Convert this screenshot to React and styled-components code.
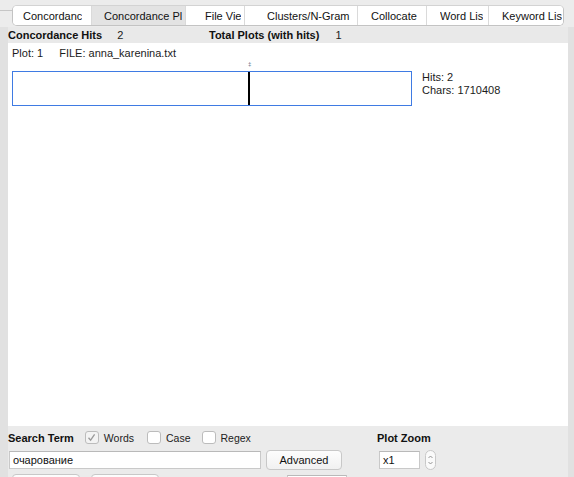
import React from 'react';
import styled, { createGlobalStyle } from 'styled-components';

const GlobalStyle = createGlobalStyle`
  html, body { margin: 0; padding: 0; }
  body {
    background: #e1e1e1;
    font-family: "Liberation Sans", Arial, sans-serif;
    font-size: 11px;
    color: #1b1b1b;
  }
`;

const Window = styled.div`
  width: 574px;
  height: 477px;
  overflow: hidden;
  display: flex;
  flex-direction: column;
  background: #e1e1e1;
`;

const TopBar = styled.div`
  position: relative;
  flex: none;
  height: 27px;
  box-sizing: border-box;
  padding: 5px 0 0 12px;
  background: #ececec;
  &::before {
    content: '';
    position: absolute;
    left: 0;
    top: 10px;
    width: 14px;
    height: 1px;
    background: #c6c6c6;
  }
`;

const Tabs = styled.div`
  position: relative;
  display: flex;
  width: 552px;
  height: 21px;
  box-sizing: border-box;
  border: 1px solid #c3c3c3;
  border-top-color: #d3d3d3;
  border-radius: 5px;
  background: #fff;
  overflow: hidden;
`;

const Tab = styled.div`
  flex: ${(p) => (p.last ? '1' : 'none')};
  width: ${(p) => p.w}px;
  box-sizing: border-box;
  display: flex;
  align-items: center;
  padding: 0 2px 0 ${(p) => p.pad}px;
  border-left: ${(p) => (p.first ? 'none' : '1px solid #dadada')};
  background: ${(p) => (p.active ? '#e3e3e3' : '#fff')};
  font-size: 11px;
  color: #111;
`;

const TabLabel = styled.span`
  display: block;
  overflow: hidden;
  white-space: nowrap;
`;

const Panel = styled.div`
  flex: 1;
  display: flex;
  flex-direction: column;
  margin: 0 6px 0 8px;
  background: #ebebeb;
`;

const HeaderRow = styled.div`
  height: 16px;
  display: flex;
  align-items: center;
  background: #e9e9e9;
`;

const Stat = styled.div`
  width: ${(p) => p.w}px;
  display: flex;
  align-items: center;
  gap: ${(p) => p.gap}px;
`;

const Bold = styled.span`
  font-weight: bold;
  color: #111;
`;

const Content = styled.div`
  height: 383px;
  box-sizing: border-box;
  padding: 4px 4px 0;
  background: #fff;
`;

const InfoLine = styled.div`
  display: flex;
  gap: 16px;
  line-height: 13px;
`;

const PlotRow = styled.div`
  display: flex;
  align-items: flex-start;
  gap: 10px;
  margin-top: 11px;
`;

const PlotBox = styled.div`
  position: relative;
  width: 400px;
  height: 35px;
  box-sizing: border-box;
  border: 1px solid #3f7be3;
`;

const HitLine = styled.div`
  position: absolute;
  top: 0;
  bottom: 0;
  left: ${(p) => p.x}px;
  width: 2px;
  background: #000;
`;

const HitMark = styled.div`
  position: absolute;
  top: -11px;
  left: ${(p) => p.x - 1}px;
  font-size: 6px;
  line-height: 6px;
  color: #4a5a78;
`;

const PlotInfo = styled.div`
  line-height: 13px;
`;

const Bottom = styled.div`
  flex: 1;
  display: grid;
  grid-template-columns: 369px auto;
  padding-top: 5px;
  background: #ebebeb;
`;

const Col = styled.div`
  display: flex;
  flex-direction: column;
`;

const Row = styled.div`
  display: flex;
  align-items: center;
  height: ${(p) => p.h}px;
  margin-top: ${(p) => p.mt || 0}px;
  padding-left: ${(p) => p.pl || 0}px;
`;

const CheckGroup = styled.label`
  display: flex;
  align-items: center;
  gap: 5px;
  margin-left: ${(p) => p.ml}px;
  font-size: 10.5px;
  color: #222;
`;

const Box = styled.span`
  width: 12px;
  height: 11px;
  border: 1px solid #bcbcbc;
  border-radius: 3px;
  background: ${(p) => (p.checked ? '#f3f3f3' : '#fff')};
  display: flex;
  align-items: center;
  justify-content: center;
`;

const TextField = styled.div`
  width: ${(p) => p.w}px;
  height: 18px;
  box-sizing: border-box;
  margin-left: ${(p) => p.ml || 0}px;
  border: 1px solid #c9c9c9;
  border-top-color: #b9b9b9;
  background: #fff;
  display: flex;
  align-items: center;
  padding-left: 3px;
  color: #111;
`;

const Button = styled.div`
  width: ${(p) => p.w}px;
  height: 20px;
  box-sizing: border-box;
  margin-left: ${(p) => p.ml || 0}px;
  border: 1px solid #c8c8c8;
  border-radius: 4px;
  background: linear-gradient(#fdfdfd, #f1f1f1);
  display: flex;
  align-items: center;
  justify-content: center;
  color: #111;
`;

const Stepper = styled.div`
  width: 11px;
  height: 20px;
  box-sizing: border-box;
  margin-left: 5px;
  border: 1px solid #c8c8c8;
  border-radius: 6px;
  background: #fafafa;
  display: flex;
  align-items: center;
  justify-content: center;
`;

const Round = styled.span`
  width: 12px;
  height: 12px;
  margin-left: 7px;
  border: 1px solid #c8c8c8;
  border-radius: 50%;
  background: #fafafa;
  flex: none;
`;

// labels as the window shows them, cut short by the tab width
const tabs = [
  { label: 'Concordanc', w: 78, pad: 10 },
  { label: 'Concordance Pl', w: 94, pad: 12, active: true },
  { label: 'File Vie', w: 59, pad: 19 },
  { label: 'Clusters/N-Gram', w: 113, pad: 22 },
  { label: 'Collocate', w: 69, pad: 13 },
  { label: 'Word Lis', w: 62, pad: 13 },
  { label: 'Keyword Lis', w: 77, pad: 13 },
];

const Check = () => (
  <svg width="9" height="9" viewBox="0 0 9 9">
    <path d="M1.5 4.8 L3.6 7.2 L7.6 1.4" fill="none" stroke="#9a9a9a" strokeWidth="1.3" />
  </svg>
);

const Arrows = () => (
  <svg width="7" height="14" viewBox="0 0 7 14">
    <path d="M1.5 5 L3.5 3 L5.5 5 M1.5 9 L3.5 11 L5.5 9" fill="none" stroke="#8a8a8a" strokeWidth="0.9" />
  </svg>
);

export default function App() {
  return (
    <Window>
      <GlobalStyle />
      <TopBar>
        <Tabs>
          {tabs.map((t, i) => (
            <Tab key={t.label} w={t.w} pad={t.pad} active={t.active} first={i === 0} last={i === tabs.length - 1}>
              <TabLabel>{t.label}</TabLabel>
            </Tab>
          ))}
        </Tabs>
      </TopBar>
      <Panel>
        <HeaderRow>
          <Stat w={201} gap={15}>
            <Bold>Concordance Hits</Bold>
            <span>2</span>
          </Stat>
          <Stat gap={16}>
            <Bold>Total Plots (with hits)</Bold>
            <span>1</span>
          </Stat>
        </HeaderRow>
        <Content>
          <InfoLine>
            <span>Plot: 1</span>
            <span>FILE: anna_karenina.txt</span>
          </InfoLine>
          <PlotRow>
            <PlotBox>
              <HitMark x={236}>‡</HitMark>
              <HitLine x={235} />
            </PlotBox>
            <PlotInfo>
              <div>Hits: 2</div>
              <div>Chars: 1710408</div>
            </PlotInfo>
          </PlotRow>
        </Content>
        <Bottom>
          <Col>
            <Row h={13}>
              <Bold>Search Term</Bold>
              <CheckGroup ml={11}>
                <Box checked><Check /></Box>
                Words
              </CheckGroup>
              <CheckGroup ml={13}>
                <Box />
                Case
              </CheckGroup>
              <CheckGroup ml={11}>
                <Box />
                Regex
              </CheckGroup>
            </Row>
            <Row h={20} mt={6}>
              <TextField w={252} ml={1}>очарование</TextField>
              <Button w={76} ml={5}>Advanced</Button>
            </Row>
            <Row h={20} mt={4} pl={4}>
              <Button w={68} />
              <Button w={68} ml={11} />
              <TextField w={60} ml={128} />
              <Round />
            </Row>
          </Col>
          <Col>
            <Row h={13}>
              <Bold>Plot Zoom</Bold>
            </Row>
            <Row h={20} mt={6} pl={2}>
              <TextField w={41}>x1</TextField>
              <Stepper><Arrows /></Stepper>
            </Row>
          </Col>
        </Bottom>
      </Panel>
    </Window>
  );
}
